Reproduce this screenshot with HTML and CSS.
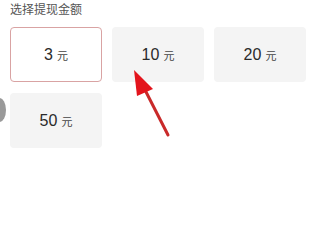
FILE: index.html
```html
<!DOCTYPE html>
<html>
<head>
    <title>选择提现金额</title>
    <link rel="stylesheet" href="styles.css">
</head>
<body>
    <div class="page">
        <div class="title">选择提现金额</div>
        <div class="amount-grid">
            <div class="amount selected"><span class="num">3</span><span class="unit">元</span></div>
            <div class="amount"><span class="num">10</span><span class="unit">元</span></div>
            <div class="amount"><span class="num">20</span><span class="unit">元</span></div>
            <div class="amount"><span class="num">50</span><span class="unit">元</span></div>
        </div>
    </div>
    <div class="side-dot"></div>
    <svg class="arrow" width="320" height="240" viewBox="0 0 320 240">
        <line x1="168" y1="135" x2="143" y2="86" stroke="#c92a2a" stroke-width="3" stroke-linecap="round"/>
        <polygon points="134,70 153,89 137,96" fill="#e3141c"/>
    </svg>
</body>
</html>
```

FILE: styles.css
```css
body {
    margin: 0;
    background-color: #fff;
    font-family: "Noto Sans CJK SC", "Liberation Sans", sans-serif;
}

.page {
    padding: 0 10px;
}

.title {
    font-size: 12px;
    line-height: 17px;
    color: #555;
}

.amount-grid {
    display: grid;
    grid-template-columns: 92px 92px 92px;
    column-gap: 10px;
    row-gap: 11px;
    margin-top: 10px;
}

.amount {
    height: 55px;
    box-sizing: border-box;
    background-color: #f4f4f4;
    border-radius: 4px;
    display: flex;
    align-items: center;
    justify-content: center;
    color: #2a2a2a;
}

.amount.selected {
    background-color: #fff;
    border: 1px solid #d9a3a3;
}

.num {
    font-family: "Liberation Sans", sans-serif;
    font-size: 16px;
}

.unit {
    font-size: 11px;
    margin-left: 4px;
    color: #444;
}

.side-dot {
    position: absolute;
    left: -7px;
    top: 98px;
    width: 13px;
    height: 24px;
    border-radius: 50%;
    background-color: #9a9a9a;
}

.arrow {
    position: absolute;
    left: 0;
    top: 0;
}
```
